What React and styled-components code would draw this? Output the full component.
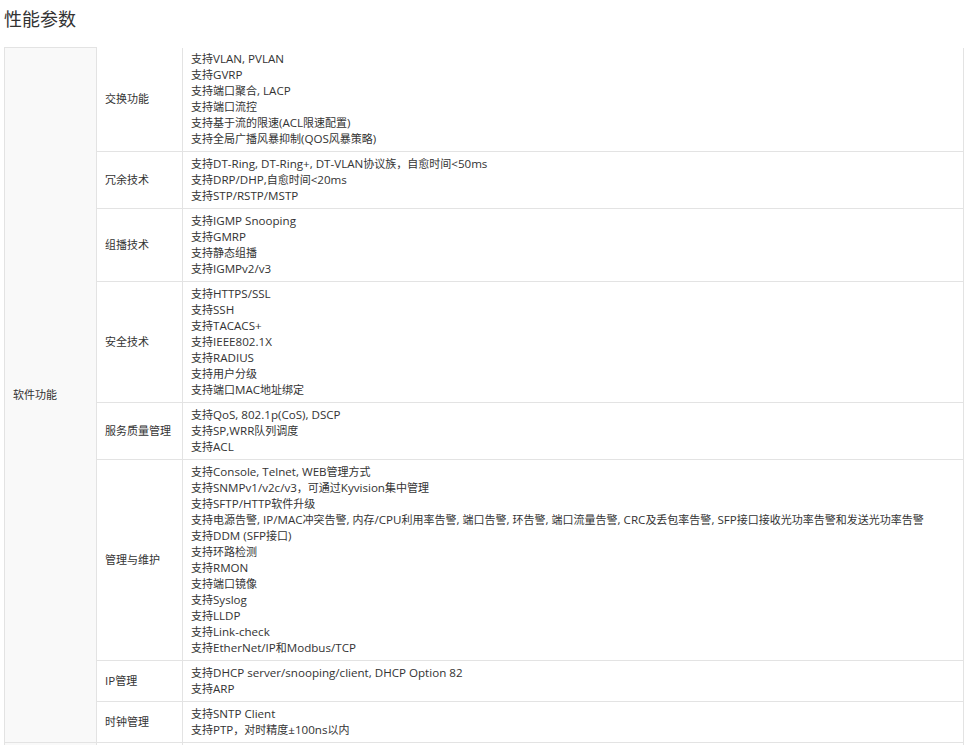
import React from "react";
import styled, { createGlobalStyle } from "styled-components";

const Global = createGlobalStyle`
  html, body { margin: 0; padding: 0; background: #fff; }
  body { font-family: "Open Sans", "Noto Sans CJK SC", sans-serif; color: #333; }
`;

const Page = styled.div`
  padding: 0 4px;
`;

const Title = styled.h2`
  margin: 0;
  padding: 6px 0 0;
  height: 47px;
  box-sizing: border-box;
  font-size: 18px;
  line-height: 24px;
  font-weight: 400;
  color: #333;
  font-family: "Noto Sans CJK SC", sans-serif;
`;

const Table = styled.table`
  width: 960px;
  border-collapse: collapse;
  table-layout: fixed;
  font-family: "Open Sans", "Noto Sans CJK SC", sans-serif;
  font-size: 11px;
  line-height: 16px;
  color: #333;
`;

const Cell = styled.td`
  border: 1px solid #e3e3e3;
  ${(p) => (p.$noTop ? "border-top: none; padding-top: 3px;" : "")}
  padding-left: 8px;
  padding-right: 8px;
  padding-bottom: 4px;
  ${(p) => (p.$noTop ? "" : "padding-top: 4px;")}
  vertical-align: middle;
  background: ${(p) => (p.$shade ? "#f9f9f9" : "#fff")};
`;

const Line = styled.div`
  white-space: nowrap;
`;

const Latin = styled.span`
  font-family: "Open Sans", sans-serif;
  font-size: 11.6px;
`;

function Mixed({ text }) {
  const parts = text.split(/([\u0000-\u02FF\u2000-\u206F]+)/).filter(Boolean);
  return parts.map((p, i) =>
    /^[\u0000-\u02FF\u2000-\u206F]+$/.test(p) ? (
      <Latin key={i}>{p}</Latin>
    ) : (
      <React.Fragment key={i}>{p}</React.Fragment>
    )
  );
}

const rows = [
  ["交换功能", [
    "支持VLAN, PVLAN",
    "支持GVRP",
    "支持端口聚合, LACP",
    "支持端口流控",
    "支持基于流的限速(ACL限速配置)",
    "支持全局广播风暴抑制(QOS风暴策略)",
  ]],
  ["冗余技术", [
    "支持DT-Ring, DT-Ring+, DT-VLAN协议族，自愈时间<50ms",
    "支持DRP/DHP,自愈时间<20ms",
    "支持STP/RSTP/MSTP",
  ]],
  ["组播技术", [
    "支持IGMP Snooping",
    "支持GMRP",
    "支持静态组播",
    "支持IGMPv2/v3",
  ]],
  ["安全技术", [
    "支持HTTPS/SSL",
    "支持SSH",
    "支持TACACS+",
    "支持IEEE802.1X",
    "支持RADIUS",
    "支持用户分级",
    "支持端口MAC地址绑定",
  ]],
  ["服务质量管理", [
    "支持QoS, 802.1p(CoS), DSCP",
    "支持SP,WRR队列调度",
    "支持ACL",
  ]],
  ["管理与维护", [
    "支持Console, Telnet, WEB管理方式",
    "支持SNMPv1/v2c/v3，可通过Kyvision集中管理",
    "支持SFTP/HTTP软件升级",
    "支持电源告警, IP/MAC冲突告警, 内存/CPU利用率告警, 端口告警, 环告警, 端口流量告警, CRC及丢包率告警, SFP接口接收光功率告警和发送光功率告警",
    "支持DDM (SFP接口)",
    "支持环路检测",
    "支持RMON",
    "支持端口镜像",
    "支持Syslog",
    "支持LLDP",
    "支持Link-check",
    "支持EtherNet/IP和Modbus/TCP",
  ]],
  ["IP管理", [
    "支持DHCP server/snooping/client, DHCP Option 82",
    "支持ARP",
  ]],
  ["时钟管理", [
    "支持SNTP Client",
    "支持PTP，对时精度±100ns以内",
  ]],
];

export default function App() {
  return (
    <Page>
      <Global />
      <Title>性能参数</Title>
      <Table>
        <colgroup>
          <col style={{ width: 92 }} />
          <col style={{ width: 86 }} />
          <col />
        </colgroup>
        <tbody>
          {rows.map(([name, lines], i) => (
            <tr key={name}>
              {i === 0 && (
                <Cell $shade rowSpan={rows.length}>软件功能</Cell>
              )}
              <Cell $noTop={i === 0}>
                <Mixed text={name} />
              </Cell>
              <Cell $noTop={i === 0}>
                {lines.map((l) => (
                  <Line key={l}>
                    <Mixed text={l} />
                  </Line>
                ))}
              </Cell>
            </tr>
          ))}
          <tr>
            <Cell $shade>&nbsp;</Cell>
            <Cell>&nbsp;</Cell>
            <Cell>&nbsp;</Cell>
          </tr>
        </tbody>
      </Table>
    </Page>
  );
}
